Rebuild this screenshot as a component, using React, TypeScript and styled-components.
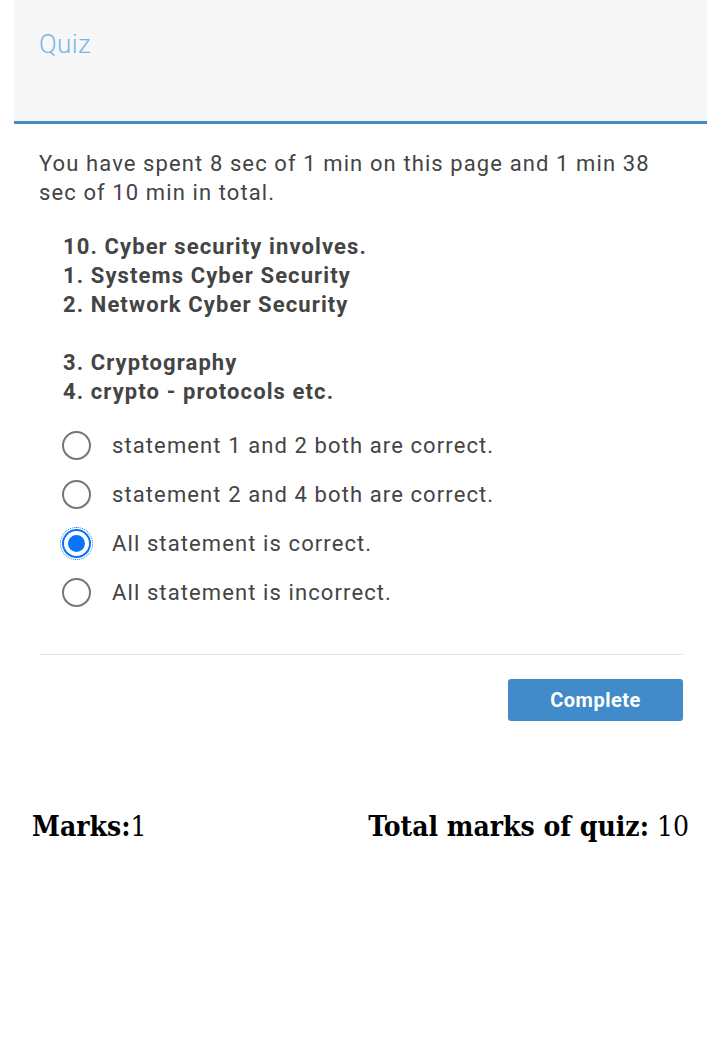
import React from "react";
import styled, { createGlobalStyle } from "styled-components";

const Global = createGlobalStyle`
  html, body { margin: 0; padding: 0; background: #fff; }
  body { font-family: Roboto, "Noto Sans", sans-serif; color: #444; }
`;

const Page = styled.div`
  width: 719px;
  display: flex;
  flex-direction: column;
`;

const Panel = styled.div`
  margin: 0 12px 0 14px;
`;

const Header = styled.div`
  background: #f7f7f7;
  border-bottom: 3px solid #428bca;
  height: 124px;
  padding: 28px 25px 0;
  box-sizing: border-box;
`;

const Title = styled.h1`
  margin: 0;
  font-family: Roboto, sans-serif;
  font-weight: 300;
  font-size: 26px;
  line-height: 32px;
  color: #7ab6e6;
  letter-spacing: 0.4px;
`;

const Body = styled.div`
  padding: 25px 24px 0 25px;
  letter-spacing: 1.1px;
`;

const Timer = styled.p`
  margin: 0;
  font-size: 22px;
  line-height: 29px;
  color: #444;
`;

const Question = styled.div`
  margin: 25px 0 0 24px;
  font-weight: 700;
  font-size: 22px;
  line-height: 29px;
  color: #444;
`;

const Line = styled.div<{ $gap?: boolean }>`
  margin-top: ${(p) => (p.$gap ? "29px" : "0")};
`;

const Options = styled.div`
  margin: 25px 0 0 23px;
  display: flex;
  flex-direction: column;
  gap: 21px;
`;

const Option = styled.label`
  display: flex;
  align-items: center;
  gap: 21px;
  height: 28px;
  font-size: 22px;
  color: #444;
`;

const Radio = styled.span<{ $checked?: boolean }>`
  width: 29px;
  height: 29px;
  box-sizing: border-box;
  border-radius: 50%;
  border: 2px solid ${(p) => (p.$checked ? "#0a74ff" : "#767676")};
  display: flex;
  align-items: center;
  justify-content: center;
  flex: none;
  outline: ${(p) => (p.$checked ? "1px dotted #1a6fe0" : "none")};
  outline-offset: 1px;
  &::after {
    content: "";
    width: 17px;
    height: 17px;
    border-radius: 50%;
    background: #0a74ff;
    display: ${(p) => (p.$checked ? "block" : "none")};
  }
`;

const Divider = styled.hr`
  margin: 48px 0 0;
  border: 0;
  border-top: 1px solid #e5e5e5;
`;

const Actions = styled.div`
  display: flex;
  justify-content: flex-end;
  margin-top: 24px;
`;

const Button = styled.button`
  width: 175px;
  height: 42px;
  background: #428bca;
  border: 0;
  border-radius: 3px;
  color: #fff;
  font-family: Roboto, sans-serif;
  font-weight: 700;
  font-size: 20px;
  letter-spacing: 0.5px;
`;

const Marks = styled.div`
  display: flex;
  justify-content: space-between;
  margin: 89px 30px 0 32px;
  font-family: "DejaVu Serif", serif;
  font-stretch: condensed;
  font-size: 28px;
  color: #000;
`;

const Strong = styled.b`
  font-weight: 700;
`;

const options = [
  "statement 1 and 2 both are correct.",
  "statement 2 and 4 both are correct.",
  "All statement is correct.",
  "All statement is incorrect.",
];

export default function App() {
  return (
    <Page>
      <Global />
      <Panel>
        <Header>
          <Title>Quiz</Title>
        </Header>
        <Body>
          <Timer>
            You have spent 8 sec of 1 min on this page and 1 min 38 sec of 10 min in total.
          </Timer>
          <Question>
            <Line>10. Cyber security involves.</Line>
            <Line>1. Systems Cyber Security</Line>
            <Line>2. Network Cyber Security</Line>
            <Line $gap>3. Cryptography</Line>
            <Line>4. crypto - protocols etc.</Line>
          </Question>
          <Options>
            {options.map((o, i) => (
              <Option key={o}>
                <Radio $checked={i === 2} />
                {o}
              </Option>
            ))}
          </Options>
          <Divider />
          <Actions>
            <Button>Complete</Button>
          </Actions>
        </Body>
      </Panel>
      <Marks>
        <span>
          <Strong>Marks:</Strong>1
        </span>
        <span>
          <Strong>Total marks of quiz:</Strong> 10
        </span>
      </Marks>
    </Page>
  );
}
